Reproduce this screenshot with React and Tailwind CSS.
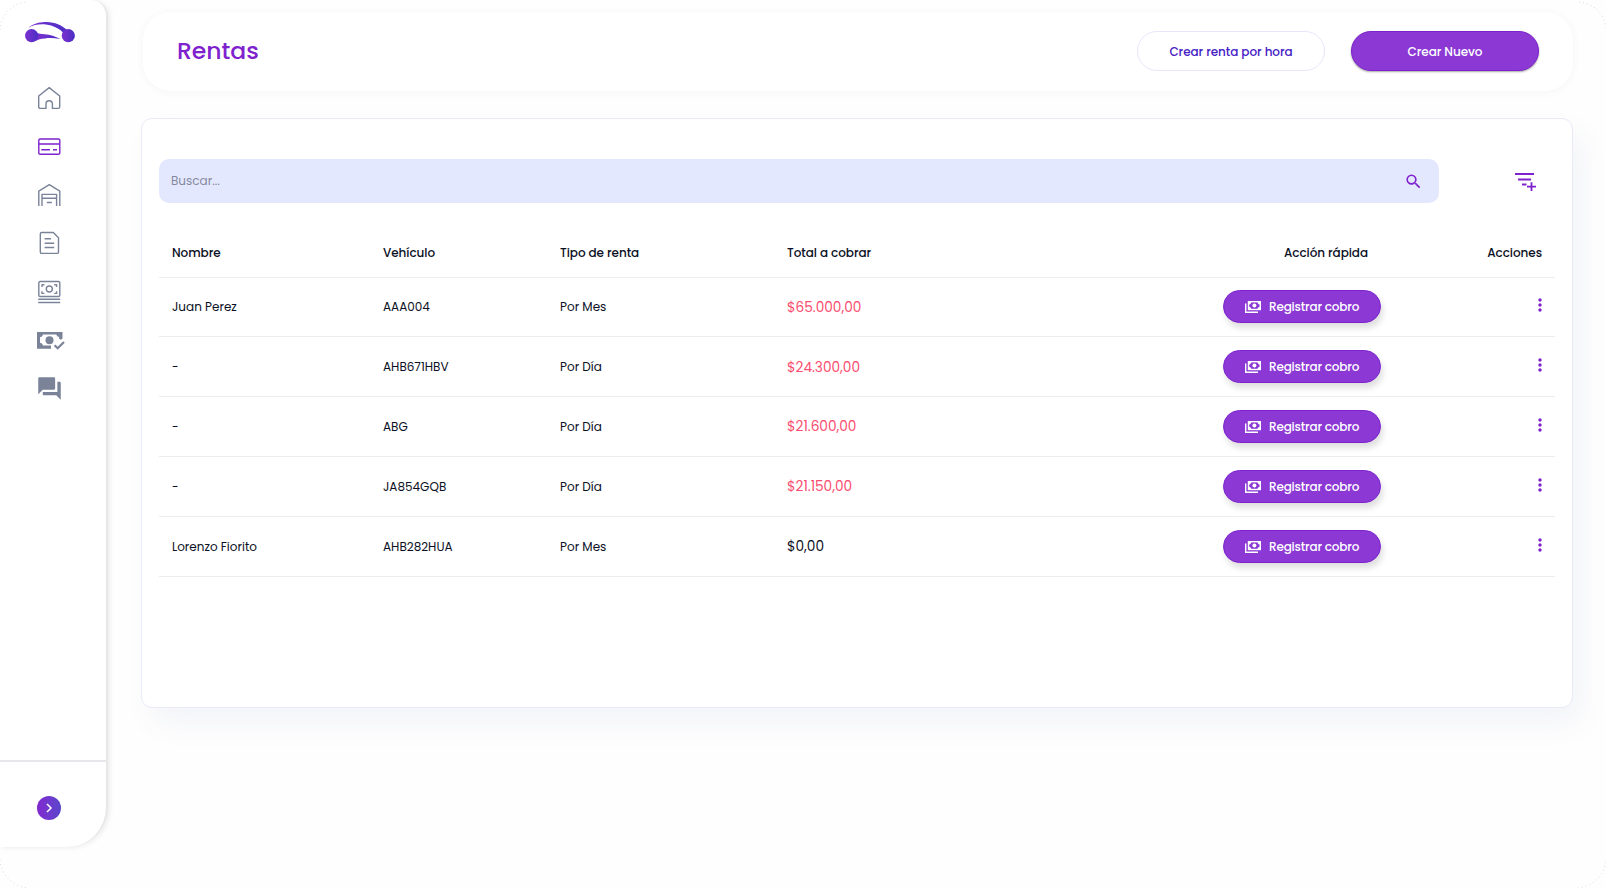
import { MdSearch, MdMoreVert, MdQuestionAnswer } from 'react-icons/md';

const rentas = [
  { id: 1, nombre: 'Juan Perez', vehiculo: 'AAA004', tipo: 'Por Mes', total: '$65.000,00', debe: true },
  { id: 2, nombre: '-', vehiculo: 'AHB671HBV', tipo: 'Por Día', total: '$24.300,00', debe: true },
  { id: 3, nombre: '-', vehiculo: 'ABG', tipo: 'Por Día', total: '$21.600,00', debe: true },
  { id: 4, nombre: '-', vehiculo: 'JA854GQB', tipo: 'Por Día', total: '$21.150,00', debe: true },
  { id: 5, nombre: 'Lorenzo Fiorito', vehiculo: 'AHB282HUA', tipo: 'Por Mes', total: '$0,00', debe: false },
];

function Logo() {
  return (
    <svg className="w-[50px] h-[21px]" viewBox="0 0 50 21">
      <defs>
        <linearGradient id="logo" x1="0" y1="0" x2="1" y2="0">
          <stop offset="0" stopColor="#7c30d0" />
          <stop offset="1" stopColor="#4b2fc4" />
        </linearGradient>
      </defs>
      <g fill="url(#logo)">
        <path d="M3 6C9 1 16-.2 22 0c8 .3 14.500 3 20 8l-3 3.500C34.500 6.500 28 3.400 21 2.500 14.500 1.900 8.500 2.700 3 6z" />
        <path d="M11 10.500c2.500 1.500 5 1.500 8.500 1.700 6 .4 10.500 2 16 4.800-6-1-11-1.200-15.500-.6-4.500 .5-6.500 .8-9.500 2.600z" />
        <circle cx="6.600" cy="13.700" r="6.600" />
        <circle cx="43.300" cy="13.700" r="6.600" />
      </g>
    </svg>
  );
}

const line = { fill: 'none', stroke: 'currentColor', strokeWidth: 1.4, strokeLinejoin: 'round' };

function HomeIcon() {
  return (
    <svg className="w-6 h-6" viewBox="0 0 24 24" {...line}>
      <path d="M1.700 10 12.200 1.600 22.700 10v11a1.400 1.400 0 0 1-1.400 1.400h-5.900V18a3.200 3.200 0 0 0-6.400 0v4.400H3.100A1.400 1.400 0 0 1 1.700 21z" />
    </svg>
  );
}

function CardIcon() {
  return (
    <svg className="w-6 h-6" viewBox="0 0 24 24" {...line}>
      <rect x="1.800" y="4" width="21" height="15.200" rx="1.300" />
      <path d="M1.800 9h21M4.300 14.700h8.700M16 14.700h4" />
    </svg>
  );
}

function GarageIcon() {
  return (
    <svg className="w-6 h-6" viewBox="0 0 24 24" {...line}>
      <path d="M1.800 23V8.200L12.300 1.700l10.500 6.500V23" />
      <path d="M5 23V11.400h14.600V23M5 15.200h14.600M9.800 19.500h5" />
    </svg>
  );
}

function DocIcon() {
  return (
    <svg className="w-6 h-6" viewBox="0 0 24 24" {...line}>
      <path d="M4.800 1.500h11.500l5.200 5.300v14.100a1.500 1.500 0 0 1-1.500 1.500h-15.200a1.500 1.500 0 0 1-1.500-1.500V3a1.500 1.500 0 0 1 1.500-1.500z" />
      <path d="M7.600 7.700h6.500M7.600 12.200h9.600M7.600 16.500h9.600" />
    </svg>
  );
}

function CashIcon() {
  return (
    <svg className="w-6 h-6" viewBox="0 0 24 24" {...line}>
      <rect x="1.800" y="1.500" width="21" height="15" rx="1.300" />
      <circle cx="12.300" cy="9" r="3" />
      <path d="M5 7V4.800h2.400M17.200 4.800h2.400V7M5 11.200v2.200h2.400M17.200 13.400h2.400v-2.200M1.200 19.300h22M1.200 22.500h22" />
    </svg>
  );
}

function CashCheckIcon() {
  return (
    <svg className="w-7 h-5 ml-1 mt-[2px]" viewBox="0 0 28 20" fill="currentColor">
      <path fillRule="evenodd" d="M0 1h25.500v6.500l-1.700 1.200-1.700-1V6a3.400 3.400 0 0 1-2.800-2.600H6A3.400 3.400 0 0 1 3 6.200v5.600a3.400 3.400 0 0 1 3 2.700h8V17.800H0z" />
      <circle cx="12.500" cy="9.200" r="4" />
      <path d="M17.600 14.200 20.700 17.300 27 11" fill="none" stroke="currentColor" strokeWidth="2.200" />
    </svg>
  );
}

function PaymentsIcon() {
  return (
    <svg className="w-4 h-3" viewBox="0 0 16 12">
      <path d="M.7 2.500v8.800h12.300" fill="none" stroke="currentColor" strokeWidth="1.400" />
      <rect x="3.500" y=".7" width="11.800" height="7.800" fill="none" stroke="currentColor" strokeWidth="1.400" />
      <path d="M3.500 3.500a2.800 2.800 0 0 0 2.800-2.800H3.500zM15.300 3.500A2.800 2.800 0 0 1 12.500.7h2.800zM3.500 5.700a2.800 2.800 0 0 1 2.800 2.800H3.500zM15.300 5.700a2.800 2.800 0 0 0-2.800 2.800h2.800z" fill="currentColor" />
      <circle cx="9.400" cy="4.600" r="2" fill="currentColor" />
    </svg>
  );
}

function FilterAddIcon() {
  return (
    <svg className="w-[21px] h-[18px]" viewBox="0 0 21 18" fill="none" stroke="#7e22ce" strokeWidth="1.800">
      <path d="M0 1h19M3 6.500h13M7 11.500h4.500M12 13.700h9M16.500 9.200v8.800" />
    </svg>
  );
}

const menu = [
  { id: 'inicio', icon: <HomeIcon /> },
  { id: 'rentas', icon: <CardIcon />, active: true },
  { id: 'cocheras', icon: <GarageIcon /> },
  { id: 'reportes', icon: <DocIcon /> },
  { id: 'caja', icon: <CashIcon /> },
  { id: 'cobros', icon: <CashCheckIcon /> },
  { id: 'mensajes', icon: <MdQuestionAnswer size={27} /> },
];

function Sidebar() {
  return (
    <aside className="w-[108px] h-[847px] shrink-0 flex flex-col bg-white border-r-2 border-[#e8e8e8] rounded-tr-[16px] rounded-br-[40px] shadow-[2px_1px_5px_rgba(0,0,0,0.07)]">
      <div className="h-[74px] pt-[22px] pl-[25px]"><Logo /></div>
      <nav className="flex flex-col w-[98px]">
        {menu.map(m => (
          <a key={m.id} className={m.active ? 'h-[48.4px] flex items-center justify-center text-[#7e22ce]' : 'h-[48.4px] flex items-center justify-center text-[#7a8398]'}>
            {m.icon}
          </a>
        ))}
      </nav>
      <div className="mt-auto h-[87px] border-t-2 border-[#e5e7eb] pl-[37.400px] pt-[34px]">
        <button className="w-6 h-6 rounded-full flex items-center justify-center bg-linear-to-r from-[#8027cf] to-[#5b45cc]">
          <svg className="w-2 h-[10px]" viewBox="0 0 8 10" fill="none" stroke="white" strokeWidth="1.500"><path d="M2 1l4 4-4 4" /></svg>
        </button>
      </div>
    </aside>
  );
}

export default function App() {
  return (
    <div className="relative w-[1606px] h-[888px] overflow-hidden flex bg-[#fefefe] font-[Poppins,Inter,sans-serif] text-[#0b1024]">
      <Sidebar />

      <main className="flex-1 pl-[33px] pr-[33px] pt-[12px]">
        <header className="h-[79px] ml-[2px] flex items-center pl-[34px] pr-[34px] pb-[2px] bg-white rounded-[28px] shadow-[0_1px_8px_rgba(70,80,150,0.05)]">
          <h1 className="text-[23.500px] font-medium text-[#7e22ce] flex-1">Rentas</h1>
          <button className="w-[188px] h-10 pt-[2px] rounded-full border border-[#e9e5fa] text-[12px] tracking-[-0.005em] font-medium text-[#4621c4]">Crear renta por hora</button>
          <button className="ml-[26px] w-[188px] h-10 pt-[2px] rounded-full bg-[#8b38d5] border border-[#7e22ce] text-[12px] tracking-[-0.005em] font-medium text-white shadow-[0_1px_2px_rgba(0,0,0,0.35)]">Crear Nuevo</button>
        </header>

        <section className="mt-[27px] h-[590px] bg-white border border-[#e9e9f8] rounded-[11px] pl-[17px] pr-4 pt-10 shadow-[10px_16px_30px_rgba(70,80,150,0.06)]">
          <div className="flex items-center">
            <div className="w-[1280px] h-11 rounded-[10px] bg-[#e4e8ff] flex items-center pl-3 pr-4">
              <input className="flex-1 bg-transparent outline-none text-[12px] placeholder-[#858a9e]" placeholder="Buscar..." />
              <MdSearch size={19} color="#7e22ce" />
            </div>
            <button className="ml-[76px] pt-px"><FilterAddIcon /></button>
          </div>

          <table className="mt-[26px] w-[1396px] table-fixed text-left text-[12px]">
            <colgroup>
              <col className="w-[211px]" />
              <col className="w-[177px]" />
              <col className="w-[227px]" />
              <col className="w-[436px]" />
              <col className="w-[184px]" />
              <col className="w-[161px]" />
            </colgroup>
            <thead>
              <tr className="h-[48px] border-b border-[#ededf0] tracking-[-0.005em]">
                <th className="pl-[13px] pt-px font-medium">Nombre</th>
                <th className="pl-[13px] pt-px font-medium">Vehículo</th>
                <th className="pl-[13px] pt-px font-medium">Tipo de renta</th>
                <th className="pl-[13px] pt-px font-medium">Total a cobrar</th>
                <th className="pr-[26px] pt-px font-medium text-right">Acción rápida</th>
                <th className="pr-[13px] pt-px font-medium text-right">Acciones</th>
              </tr>
            </thead>
            <tbody>
              {rentas.map(r => (
                <tr key={r.id} className="h-[59.900px] border-b border-[#ededf0]">
                  <td className="pl-[13px]">{r.nombre}</td>
                  <td className="pl-[13px]">{r.vehiculo}</td>
                  <td className="pl-[13px]">{r.tipo}</td>
                  <td className={r.debe ? 'pl-[13px] pt-[2px] text-[13.700px] text-[#fb4d70]' : 'pl-[13px] pt-[2px] text-[13.700px]'}>{r.total}</td>
                  <td className="pl-[13px]">
                    <button className="w-[158px] h-[33px] rounded-full bg-[#8b38d5] border border-[#7e22ce] text-white tracking-[-0.015em] font-medium flex items-center pl-[21px] gap-2 whitespace-nowrap shadow-[2px_5px_6px_rgba(0,0,0,0.13)]">
                      <PaymentsIcon />
                      Registrar cobro
                    </button>
                  </td>
                  <td className="pr-[5px] pb-[3px]">
                    <MdMoreVert size={20} color="#7e22ce" className="ml-auto" />
                  </td>
                </tr>
              ))}
            </tbody>
          </table>
        </section>
      </main>

      <svg className="absolute inset-0 w-full h-full pointer-events-none" fill="none" stroke="#dcdcdc" strokeDasharray="1 3">
        <path d="M0 30C1 14 12 3 27 2M1579 2c15 1 26 12 27 28M0 860c1 15 12 26 28 28M1578 888c16-2 27-13 28-28" />
      </svg>
    </div>
  );
}
